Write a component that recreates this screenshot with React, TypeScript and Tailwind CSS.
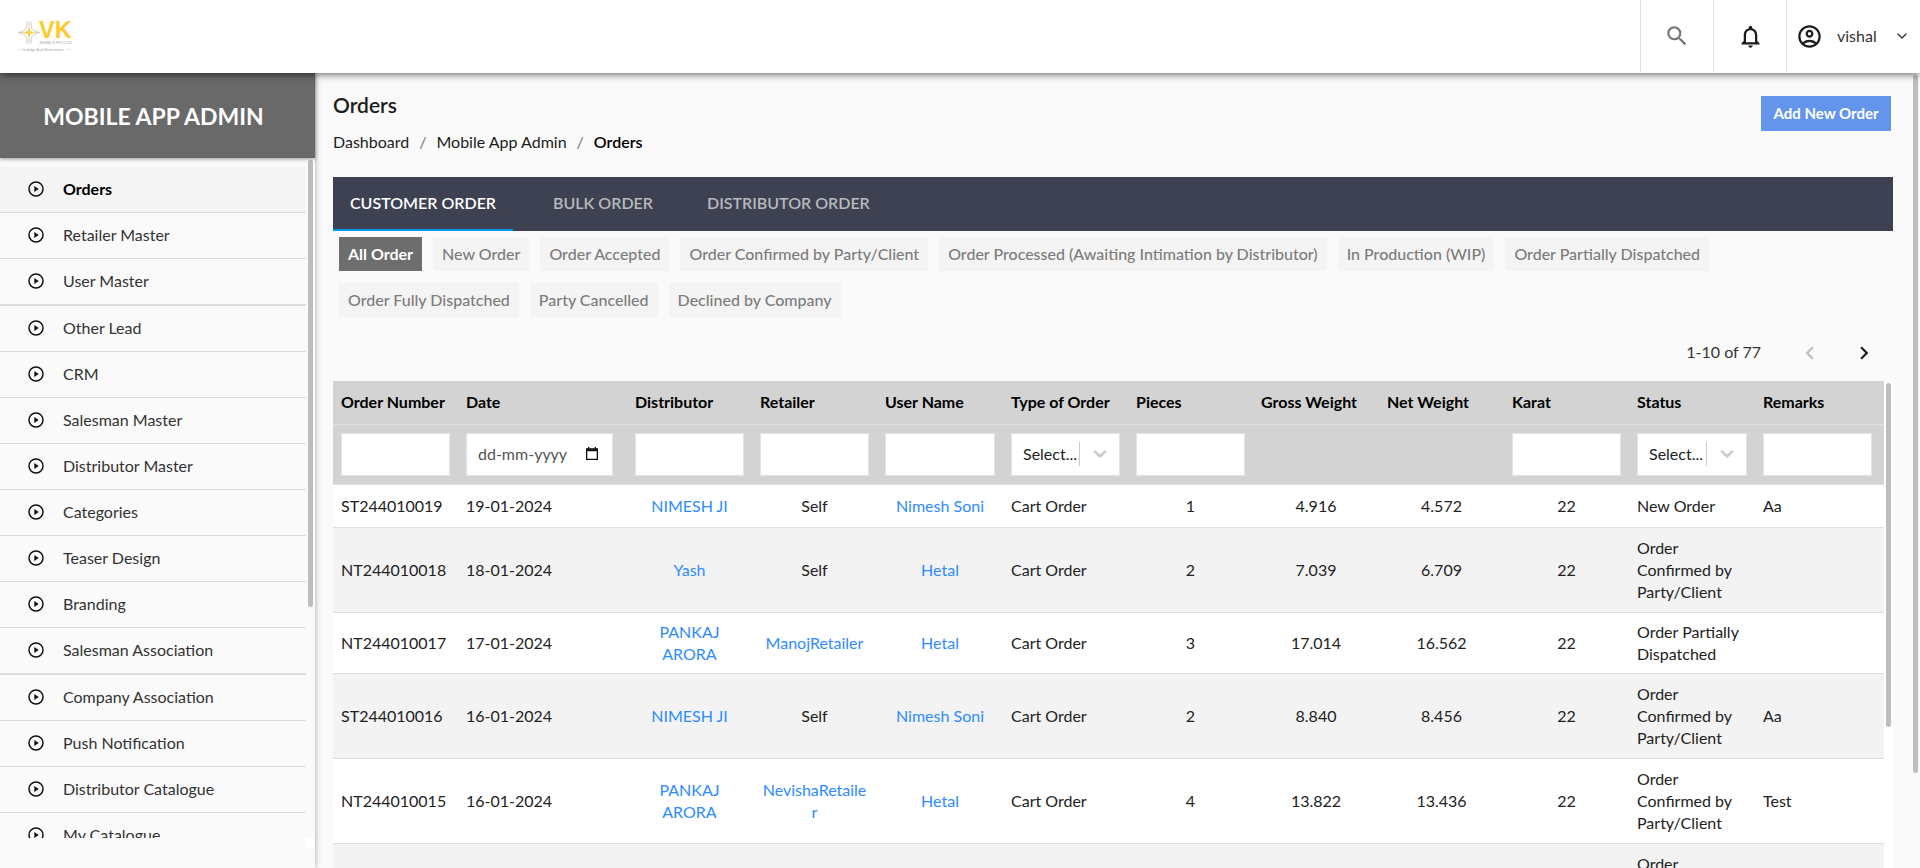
import { ReactNode, useState } from "react";
import {
  MdKeyboardArrowLeft,
  MdKeyboardArrowRight,
  MdNotificationsNone,
  MdOutlineAccountCircle,
  MdSearch,
} from "react-icons/md";
import { ChevronDown } from "lucide-react";

type Order = {
  number: string;
  date: string;
  distributor: string;
  retailer: string;
  user: string;
  type: string;
  pieces: string;
  gross: string;
  net: string;
  karat: string;
  status: string;
  remarks: string;
};

const menu = [
  { label: "Orders" },
  { label: "Retailer Master" },
  { label: "User Master", groupEnd: true },
  { label: "Other Lead" },
  { label: "CRM" },
  { label: "Salesman Master" },
  { label: "Distributor Master" },
  { label: "Categories" },
  { label: "Teaser Design" },
  { label: "Branding" },
  { label: "Salesman Association", groupEnd: true },
  { label: "Company Association" },
  { label: "Push Notification" },
  { label: "Distributor Catalogue" },
  { label: "My Catalogue" },
];

const tabs = ["CUSTOMER ORDER", "BULK ORDER", "DISTRIBUTOR ORDER"];

const stages = [
  "All Order",
  "New Order",
  "Order Accepted",
  "Order Confirmed by Party/Client",
  "Order Processed (Awaiting Intimation by Distributor)",
  "In Production (WIP)",
  "Order Partially Dispatched",
  "Order Fully Dispatched",
  "Party Cancelled",
  "Declined by Company",
];

const columns = [
  { label: "Order Number", filter: "text", width: "w-[125px]" },
  { label: "Date", filter: "date", width: "w-[169px]" },
  { label: "Distributor", filter: "text", width: "w-[125px]" },
  { label: "Retailer", filter: "text", width: "w-[125px]" },
  { label: "User Name", filter: "text", width: "w-[126px]" },
  { label: "Type of Order", filter: "select", width: "w-[125px]" },
  { label: "Pieces", filter: "text", width: "w-[125px]" },
  { label: "Gross Weight", filter: "none", width: "w-[126px]" },
  { label: "Net Weight", filter: "none", width: "w-[125px]" },
  { label: "Karat", filter: "text", width: "w-[125px]" },
  { label: "Status", filter: "select", width: "w-[126px]" },
  { label: "Remarks", filter: "text", width: "" },
];

const orders: Order[] = [
  { number: "ST244010019", date: "19-01-2024", distributor: "NIMESH JI", retailer: "Self", user: "Nimesh Soni", type: "Cart Order", pieces: "1", gross: "4.916", net: "4.572", karat: "22", status: "New Order", remarks: "Aa" },
  { number: "NT244010018", date: "18-01-2024", distributor: "Yash", retailer: "Self", user: "Hetal", type: "Cart Order", pieces: "2", gross: "7.039", net: "6.709", karat: "22", status: "Order Confirmed by Party/Client", remarks: "" },
  { number: "NT244010017", date: "17-01-2024", distributor: "PANKAJ ARORA", retailer: "ManojRetailer", user: "Hetal", type: "Cart Order", pieces: "3", gross: "17.014", net: "16.562", karat: "22", status: "Order Partially Dispatched", remarks: "" },
  { number: "ST244010016", date: "16-01-2024", distributor: "NIMESH JI", retailer: "Self", user: "Nimesh Soni", type: "Cart Order", pieces: "2", gross: "8.840", net: "8.456", karat: "22", status: "Order Confirmed by Party/Client", remarks: "Aa" },
  { number: "NT244010015", date: "16-01-2024", distributor: "PANKAJ ARORA", retailer: "NevishaRetailer", user: "Hetal", type: "Cart Order", pieces: "4", gross: "13.822", net: "13.436", karat: "22", status: "Order Confirmed by Party/Client", remarks: "Test" },
  { number: "", date: "", distributor: "", retailer: "", user: "", type: "", pieces: "", gross: "", net: "", karat: "", status: "Order Confirmed by Party/Client", remarks: "" },
];

function Logo() {
  return (
    <svg viewBox="0 0 54 32" className="h-8 w-[54px] overflow-visible" aria-hidden="true">
      <g fill="none" stroke="#c2c2c2" strokeWidth="0.9">
        <path d="M9 1.5C9.4 7 9 10.4 0.5 12.5 9 14.6 9.4 18 9 23.5" />
        <path d="M13 1.5C12.6 7 13 10.4 21.5 12.5 13 14.6 12.6 18 13 23.5" />
        <path d="M11 1v6M11 18v6M0.5 12.5h5M17 12.5h4.5" strokeWidth="0.6" />
      </g>
      <path d="M11 6 12.4 11.1 17.5 12.5 12.4 13.9 11 19 9.6 13.9 4.5 12.5 9.6 11.1Z" fill="#fbd34a" />
      <text x="21" y="18" fontFamily="Liberation Sans, sans-serif" fontSize="23.5" fontWeight="700" fill="#ffcb2b">VK</text>
      <circle cx="52.6" cy="1.4" r="0.7" fill="#d5d5d5" />
      <text x="21" y="23.6" fontFamily="Liberation Sans, sans-serif" fontSize="4" fill="#a3a3a3">JEWELS PVT.LTD.</text>
      <path d="M0 29.5h4M49 29.5h4" stroke="#c4c4c4" strokeWidth="0.6" />
      <text x="5" y="30.8" fontFamily="Liberation Sans, sans-serif" fontSize="3.8" fill="#a8a8a8">Indulge And Illustrations</text>
    </svg>
  );
}

function PlayIcon() {
  return (
    <svg viewBox="0 0 16 16" className="size-4 shrink-0" aria-hidden="true">
      <circle cx="8" cy="8" r="7" fill="none" stroke="#111" strokeWidth="1.5" />
      <path d="M6.3 5.1v5.8L10.7 8z" fill="#111" />
    </svg>
  );
}

function CalendarIcon() {
  return (
    <svg viewBox="0 0 12 14" className="h-3.5 w-3" aria-hidden="true">
      <path d="M2 0h1.4v1.2h5.2V0H10v1.2h2V13H0V1.2h2zM1.3 4.2v7.6h9.4V4.2z" fill="#111" fillRule="evenodd" />
    </svg>
  );
}

const field = "h-[43px] w-full rounded-none border border-[#e3e3e3] bg-white px-3 outline-none";

function Filter({ label, kind }: { label: string; kind: string }) {
  if (kind === "none") return null;
  if (kind === "select") {
    return (
      <div className="relative">
        <select aria-label={`Filter ${label}`} className={`${field} appearance-none pl-[11px] text-base text-[#222]`}>
          <option>Select...</option>
        </select>
        <span className="pointer-events-none absolute inset-y-0 right-0 flex items-center">
          <span className="h-6 w-px bg-[#ccc]" />
          <ChevronDown size={20} strokeWidth={3} className="mx-[10px] text-[#ccc]" />
        </span>
      </div>
    );
  }
  if (kind === "date") {
    return (
      <div className="flex h-[43px] w-[147px] items-center gap-1 border border-[#e3e3e3] bg-white pr-[14px] pl-[11px]">
        <input aria-label={`Filter ${label}`} placeholder="dd-mm-yyyy" className="w-0 grow outline-none placeholder:text-[#555]" />
        <button type="button" aria-label="Open calendar">
          <CalendarIcon />
        </button>
      </div>
    );
  }
  return <input type="text" aria-label={`Filter ${label}`} className={field} />;
}

function Cell({ children, center, link }: { children: ReactNode; center?: boolean; link?: boolean }) {
  return (
    <td className={`px-2 py-2 align-middle wrap-break-word ${center ? "text-center" : ""}`}>
      {link ? (
        <a href="#detail" className="text-[#2d8cff]">
          {children}
        </a>
      ) : (
        children
      )}
    </td>
  );
}

function Header() {
  return (
    <header className="relative z-20 flex h-[73px] shrink-0 items-stretch justify-between bg-white pb-px shadow-[0_1px_8px_rgba(0,0,0,0.65)]">
      <a href="#home" aria-label="VK Jewels" className="mt-5 ml-[18px]">
        <Logo />
      </a>
      <div className="flex">
        <button type="button" aria-label="Search" className="flex w-[73px] items-center justify-center border-l border-[#e0e0e0] text-[#757575]">
          <MdSearch size={26} />
        </button>
        <button type="button" aria-label="Notifications" className="flex w-[73px] items-center justify-center border-l border-[#e0e0e0] text-[#1c1c1c]">
          <MdNotificationsNone size={27} />
        </button>
        <button type="button" className="flex w-[134px] items-center border-l border-[#e0e0e0] pr-[10px] pl-[9px] text-[#333]">
          <MdOutlineAccountCircle size={27} className="text-[#1c1c1c]" />
          <span className="ml-[14px] grow text-left text-base">vishal</span>
          <ChevronDown size={16} strokeWidth={2} />
        </button>
      </div>
    </header>
  );
}

function Sidebar() {
  return (
    <aside className="relative z-10 flex w-[315px] shrink-0 flex-col bg-[#fafafa] shadow-[0_0_6px_rgba(0,0,0,0.35)]">
      <div className="z-10 flex h-[85px] shrink-0 items-center justify-center bg-[#696969] pt-px pr-2 text-[23px] font-bold text-white shadow-[0_1px_4px_rgba(0,0,0,0.4)]">
        MOBILE APP ADMIN
      </div>
      <div className="flex min-h-0 flex-1 overflow-hidden">
        <nav aria-label="Mobile app admin" className="min-h-0 flex-1 overflow-hidden pt-[9px]">
          <ul>
            {menu.map((item, i) => (
              <li key={item.label} className={`border-[#dcdcdc] ${item.groupEnd ? "border-b-2" : "border-b"} ${i === 0 ? "bg-[#f4f4f4]" : ""}`}>
                <a
                  href="#menu"
                  className={`flex h-[45px] items-center gap-[19px] pb-px pl-7 text-base ${i === 0 ? "font-bold text-black" : "text-[#333]"}`}
                >
                  <PlayIcon />
                  {item.label}
                </a>
              </li>
            ))}
          </ul>
        </nav>
        <div className="w-[9px] shrink-0 pt-[2px] pl-[2px]">
          <div className="h-[66%] w-[5px] rounded-full bg-[#bdbdbd]" />
        </div>
      </div>
      <div className="flex h-[30px] shrink-0 items-start justify-end">
        <span className="size-[9px] bg-white" />
      </div>
    </aside>
  );
}

function Toolbar() {
  const [tab, setTab] = useState(0);
  const [stage, setStage] = useState(0);
  return (
    <>
      <div className="flex items-start justify-between pr-[2px]">
        <div>
          <h1 className="text-[21px] leading-[26px] font-semibold text-[#1c1c1c]">Orders</h1>
          <nav aria-label="Breadcrumb" className="mt-[14px] flex gap-[10px] text-base leading-5 text-[#1c1c1c]">
            <a href="#dashboard">Dashboard</a>
            <span className="text-[#777]">/</span>
            <a href="#admin">Mobile App Admin</a>
            <span className="text-[#777]">/</span>
            <span className="font-semibold text-black">Orders</span>
          </nav>
        </div>
        <button type="button" className="mt-1 h-[35px] w-[130px] bg-[#6495ed] text-[15px] font-bold text-white">
          Add New Order
        </button>
      </div>

      <div role="tablist" className="mt-[25px] flex h-[54px] shrink-0 bg-[#3d4151]">
        {tabs.map((t, i) => (
          <button
            key={t}
            type="button"
            role="tab"
            aria-selected={i === tab}
            onClick={() => setTab(i)}
            className={`min-w-[180px] border-b-2 px-[14px] text-base font-semibold ${
              i === tab ? "border-[#039be5] text-white" : "border-transparent text-[#b8b9be]"
            }`}
          >
            {t}
          </button>
        ))}
      </div>

      <div className="mt-[6px] flex flex-wrap gap-x-[11px] gap-y-3 pr-[170px] pl-[6px]">
        {stages.map((s, i) => (
          <button
            key={s}
            type="button"
            onClick={() => setStage(i)}
            className={`h-[34px] px-[9px] pb-px text-base ${
              i === stage ? "bg-[#6e6e6e] font-bold text-white" : "bg-[#f4f4f4] font-medium text-[#7c7c7c]"
            }`}
          >
            {s}
          </button>
        ))}
      </div>

      <div className="mt-[19px] flex h-[45px] shrink-0 items-start justify-end pt-1 pr-4 text-[#333]">
        <span className="text-base leading-6">1-10 of 77</span>
        <button type="button" disabled aria-label="Previous page" className="ml-9 text-[#bdbdbd]">
          <MdKeyboardArrowLeft size={26} />
        </button>
        <button type="button" aria-label="Next page" className="ml-7 text-[#1c1c1c]">
          <MdKeyboardArrowRight size={26} />
        </button>
      </div>
    </>
  );
}

function OrdersTable() {
  return (
    <div className="flex min-h-0 flex-1 overflow-hidden bg-white">
      <div className="min-w-0 flex-1 overflow-hidden">
        <table className="w-full table-fixed border-collapse text-left text-base leading-[22px] text-[#222]">
          <colgroup>
            {columns.map((c) => (
              <col key={c.label} className={c.width} />
            ))}
          </colgroup>
          <thead className="bg-[#d3d3d3]">
            <tr className="h-[43px] border-b border-[#e0e0e0]">
              {columns.map((c) => (
                <th key={c.label} scope="col" className="px-2 font-bold whitespace-nowrap text-black">
                  {c.label}
                </th>
              ))}
            </tr>
            <tr className="h-[60px] border-b border-[#e0e0e0]">
              {columns.map((c) => (
                <td key={c.label} className="px-2 last:pr-3">
                  <Filter label={c.label} kind={c.filter} />
                </td>
              ))}
            </tr>
          </thead>
          <tbody>
            {orders.map((o, i) => (
              <tr
                key={i}
                className={`border-b border-[#dedede] ${i % 2 ? "bg-[#f3f3f3]" : "bg-white"} ${
                  o.status.endsWith("Party/Client") ? "h-[85px]" : "h-[43px]"
                }`}
              >
                <Cell>{o.number}</Cell>
                <Cell>{o.date}</Cell>
                <Cell center link>{o.distributor}</Cell>
                <Cell center link={o.retailer !== "Self"}>{o.retailer}</Cell>
                <Cell center link>{o.user}</Cell>
                <Cell>{o.type}</Cell>
                <Cell center>{o.pieces}</Cell>
                <Cell center>{o.gross}</Cell>
                <Cell center>{o.net}</Cell>
                <Cell center>{o.karat}</Cell>
                <Cell>{o.status}</Cell>
                <Cell>{o.remarks}</Cell>
              </tr>
            ))}
          </tbody>
        </table>
      </div>
      <div className="w-[9px] shrink-0 pt-[2px] pl-[2px]">
        <div className="h-[71%] w-[5px] rounded-full bg-[#bdbdbd]" />
      </div>
    </div>
  );
}

export default function App() {
  return (
    <div className="flex h-screen flex-col overflow-hidden bg-[#fafafa] font-['Lato','Noto_Sans',sans-serif]">
      <Header />
      <div className="flex min-h-0 flex-1">
        <Sidebar />
        <main className="flex min-w-0 flex-1 flex-col pt-[19px] pr-5 pl-[18px]">
          <Toolbar />
          <OrdersTable />
        </main>
        <div className="w-[7px] shrink-0 pt-[2px]">
          <div className="h-[88%] w-[5px] rounded-full bg-[#bdbdbd]" />
        </div>
      </div>
    </div>
  );
}
